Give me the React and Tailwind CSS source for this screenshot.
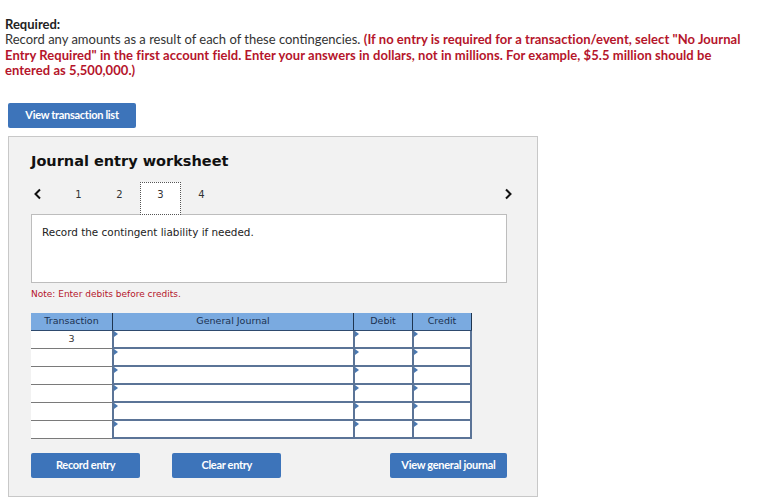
import React from "react";

const sans = { fontFamily: "Lato, 'Open Sans', sans-serif" };
const verd = { fontFamily: "'DejaVu Sans', Verdana, sans-serif" };

function Tri() {
  return (
    <span className="absolute left-0 top-0 w-0 h-0 border-t-[3px] border-b-[3px] border-l-[4px] border-t-transparent border-b-transparent border-l-[#4a78b0]" />
  );
}

function InputCell({ w, last }) {
  return (
    <div
      className={`relative h-[18px] bg-white border-l-2 border-b-2 border-[#5b7497] ${last ? "border-r-2" : ""} ${w}`}
    >
      <Tri />
    </div>
  );
}

function Btn({ children, w }) {
  return (
    <button
      className={`h-[25px] ${w} bg-[#3d74ba] rounded-[2px] text-white text-[11px] font-bold tracking-[-0.3px] flex items-center justify-center`}
      style={sans}
    >
      {children}
    </button>
  );
}

export default function App() {
  const rows = ["3", "", "", "", "", ""];
  return (
    <div className="w-[774px] h-[504px] bg-white overflow-hidden relative">
      <div className="pl-[5px] pr-[10px] pt-[17px] text-[13px] leading-[15.3px] text-[#333] whitespace-nowrap" style={sans}>
        <div className="font-bold text-[#222]">Required:</div>
        <div>
          Record any amounts as a result of each of these contingencies.{" "}
          <span className="font-bold text-[#b5152b] tracking-[0.05px]">
            (If no entry is required for a transaction/event, select "No Journal
          </span>
        </div>
        <div className="font-bold text-[#b5152b] tracking-[0.05px]">
          Entry Required" in the first account field. Enter your answers in dollars, not in millions. For example, $5.5 million should be
        </div>
        <div className="font-bold text-[#b5152b] tracking-[0.05px]">entered as 5,500,000.)</div>
      </div>
      <div className="pl-[8px] mt-[25px]">
        <Btn w="w-[128px]">View transaction list</Btn>
      </div>
      <div className="ml-[8px] mt-[8px] w-[530px] h-[361px] border border-[#c8c8c8] bg-[#f2f2f2] pl-[22px] pr-[30px]">
        <div className="pt-[14px] text-[14.5px] font-bold text-[#111] leading-[20px]" style={verd}>
          Journal entry worksheet
        </div>
        <div className="flex items-stretch h-[33px] mt-[11px] relative z-10 -mb-[1px] text-[10px] text-[#333]" style={verd}>
          <div className="w-[27px] flex items-center pl-[2px] pb-[10px]">
            <svg width="9" height="12" viewBox="0 0 9 12">
              <path d="M7 1.5 L2.5 6 L7 10.5" stroke="#111" strokeWidth="2" fill="none" />
            </svg>
          </div>
          <div className="w-[41px] flex items-center justify-center pb-[8px]">1</div>
          <div className="w-[41px] flex items-center justify-center pb-[8px]">2</div>
          <div className="w-[41px] flex items-center justify-center pb-[8px] bg-white border border-dotted border-[#555]">3</div>
          <div className="w-[41px] flex items-center justify-center pb-[8px]">4</div>
          <div className="flex-1 flex items-center justify-end pb-[10px]">
            <svg width="9" height="12" viewBox="0 0 9 12" className="mr-[-6px]">
              <path d="M2 1.5 L6.5 6 L2 10.5" stroke="#111" strokeWidth="2" fill="none" />
            </svg>
          </div>
        </div>
        <div className="h-[69px] bg-white border border-[#bdbdbd] pl-[10px] pt-[10px] text-[10.4px] text-[#222]" style={verd}>
          Record the contingent liability if needed.
        </div>
        <div className="mt-[5px] text-[9px] text-[#b5152b]" style={verd}>
          Note: Enter debits before credits.
        </div>
        <div className="mt-[11px] w-[441px] text-[9.5px]" style={verd}>
          <div className="flex h-[18px] bg-[#7aaae0] text-[#1b3150] border-b border-[#2e4a6e]">
            <div className="w-[81px] flex items-center justify-center">Transaction</div>
            <div className="w-[241px] flex items-center justify-center border-l border-[#1f3550]">General Journal</div>
            <div className="w-[59px] flex items-center justify-center border-l border-[#1f3550]">Debit</div>
            <div className="w-[60px] flex items-center justify-center border-l border-r border-[#1f3550]">Credit</div>
          </div>
          {rows.map((r, i) => (
            <div key={i} className="flex">
              <div className="w-[81px] h-[18px] bg-white border-b border-[#7a7a7a] flex items-center justify-center text-[#333]">
                {r}
              </div>
              <InputCell w="w-[241px]" />
              <InputCell w="w-[59px]" />
              <InputCell w="w-[60px]" last />
            </div>
          ))}
        </div>
        <div className="flex mt-[14px]">
          <Btn w="w-[110px]">Record entry</Btn>
          <div className="w-[32px]" />
          <Btn w="w-[110px]">Clear entry</Btn>
          <div className="w-[109px]" />
          <Btn w="w-[118px]">View general journal</Btn>
        </div>
      </div>
    </div>
  );
}
